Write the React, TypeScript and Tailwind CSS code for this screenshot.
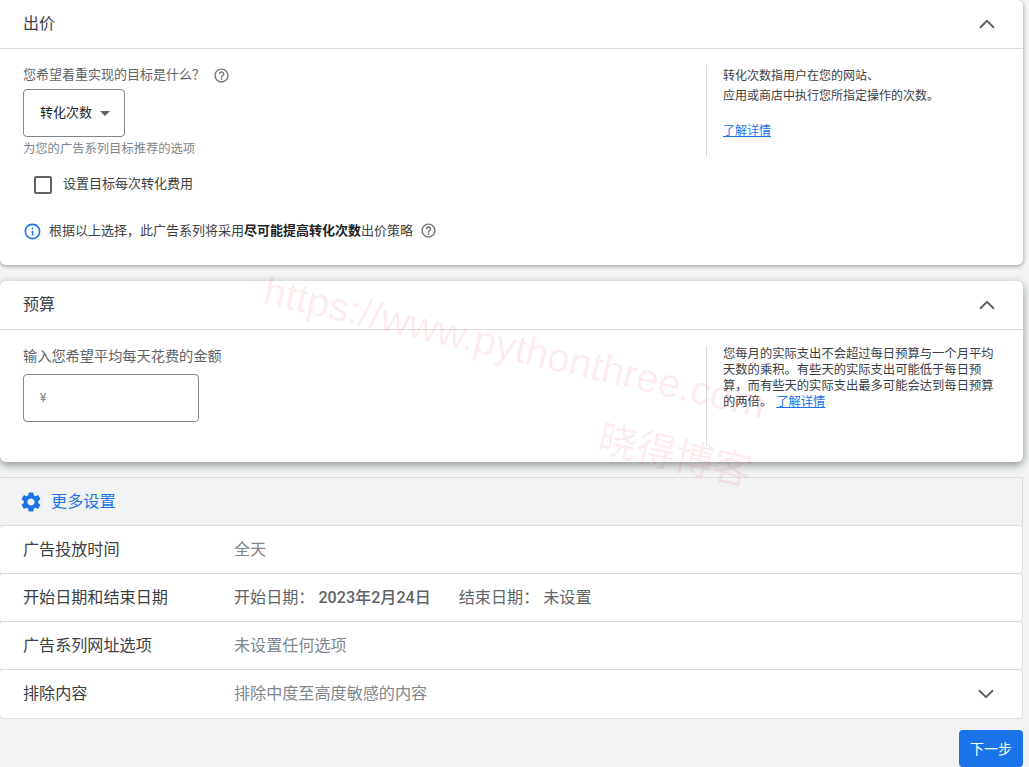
import React from "react";

const font = "font-['Roboto','Noto_Sans_CJK_SC',sans-serif]";

function HelpIcon() {
  return (
    <svg width="17" height="17" viewBox="0 0 24 24" fill="#757575">
      <path d="M11 18h2v-2h-2v2zm1-16C6.48 2 2 6.48 2 12s4.48 10 10 10 10-4.48 10-10S17.52 2 12 2zm0 18c-4.41 0-8-3.59-8-8s3.59-8 8-8 8 3.59 8 8-3.59 8-8 8zm0-14c-2.21 0-4 1.79-4 4h2c0-1.1.9-2 2-2s2 .9 2 2c0 2-3 1.75-3 5h2c0-2.25 3-2.5 3-5 0-2.21-1.79-4-4-4z" />
    </svg>
  );
}

function InfoIcon() {
  return (
    <svg width="19" height="19" viewBox="0 0 24 24" fill="#1a73e8">
      <path d="M11 7h2v2h-2V7zm0 4h2v6h-2v-6zm1-9C6.48 2 2 6.48 2 12s4.48 10 10 10 10-4.48 10-10S17.52 2 12 2zm0 18c-4.41 0-8-3.59-8-8s3.59-8 8-8 8 3.59 8 8-3.59 8-8 8z" />
    </svg>
  );
}

function GearIcon() {
  return (
    <svg width="24" height="24" viewBox="0 0 24 24" fill="#1a73e8">
      <path d="M19.14 12.94c.04-.3.06-.61.06-.94 0-.32-.02-.64-.07-.94l2.03-1.58c.18-.14.23-.41.12-.61l-1.92-3.32c-.12-.22-.37-.29-.59-.22l-2.39.96c-.5-.38-1.03-.7-1.62-.94l-.36-2.54c-.04-.24-.24-.41-.48-.41h-3.84c-.24 0-.43.17-.47.41l-.36 2.54c-.59.24-1.13.57-1.62.94l-2.39-.96c-.22-.08-.47 0-.59.22L2.74 8.87c-.12.21-.08.47.12.61l2.03 1.58c-.05.3-.09.63-.09.94s.02.64.07.94l-2.03 1.58c-.18.14-.23.41-.12.61l1.92 3.32c.12.22.37.29.59.22l2.39-.96c.5.38 1.03.7 1.62.94l.36 2.54c.05.24.24.41.48.41h3.84c.24 0 .44-.17.47-.41l.36-2.54c.59-.24 1.13-.56 1.62-.94l2.39.96c.22.08.47 0 .59-.22l1.92-3.32c.12-.22.07-.47-.12-.61l-2.01-1.58zM12 15.6c-1.98 0-3.6-1.62-3.6-3.6s1.62-3.6 3.6-3.6 3.6 1.62 3.6 3.6-1.62 3.6-3.6 3.6z" />
    </svg>
  );
}

function Chevron({ down }: { down?: boolean }) {
  return (
    <svg width="32" height="32" viewBox="0 0 32 32" fill="none" stroke="#5f6368" strokeWidth="2" className={down ? "rotate-180" : ""}>
      <path d="M9 19.8l7-7 7 7" />
    </svg>
  );
}

function CardHeader({ title }: { title: string }) {
  return (
    <div className="h-[49px] flex items-center justify-between pl-[23px] pr-5 border-b border-[#dadce0]">
      <span className="text-base text-[#3c4043]">{title}</span>
      <Chevron />
    </div>
  );
}

function SummaryRow({
  label,
  children,
  last,
}: {
  label: string;
  children: React.ReactNode;
  last?: boolean;
}) {
  return (
    <div
      className={`-ml-px flex items-center bg-white border-[#dadce0] rounded-[4px] pl-[23px] pr-5 ${
        last ? "h-[50px] border" : "h-12 border border-b-0"
      }`}
    >
      <span className="w-[211px] pt-px text-[16.1px] text-[#3c4043]">{label}</span>
      <div className="flex-1 pt-px text-[16.1px] text-[#80868b]">{children}</div>
      {last && <Chevron down />}
    </div>
  );
}

export default function App() {
  return (
    <div className={`${font} relative w-[1029px] h-[767px] overflow-hidden bg-[#f1f3f4]`}>
      <div className="w-[1023px]">
        {/* bidding */}
        <section className="h-[265px] bg-white rounded-b-[6px] rounded-tr-[6px] shadow-[0_1px_4px_rgba(60,64,67,0.55)]">
          <CardHeader title="出价" />
          <div className="flex pt-4">
            <div className="w-[706px] pl-[23px]">
              <div className="flex items-center gap-2 h-5 text-[13px] text-[#5f6368]">
                <span>您希望着重实现的目标是什么？</span>
                <HelpIcon />
              </div>
              <div className="mt-[4px] w-[102px] h-12 border border-[#80868b] rounded-[4px] flex items-center pl-4 gap-2 text-[13px] text-[#202124]">
                <span>转化次数</span>
                <span className="w-0 h-0 border-x-[5px] border-x-transparent border-t-[5px] border-t-[#5f6368]" />
              </div>
              <p className="mt-[4px] text-[12.3px] leading-4 text-[#80868b]">为您的广告系列目标推荐的选项</p>
              <label className="mt-[19px] ml-[11px] flex items-center gap-[11px] text-[13px] h-[18px] text-[#3c4043]">
                <span className="w-[18px] h-[18px] border-2 border-[#5f6368] rounded-[2px]" />
                <span className="pb-[2px]">设置目标每次转化费用</span>
              </label>
              <div className="mt-[27px] flex items-center h-5 text-[13px] text-[#3c4043]">
                <InfoIcon />
                <span className="ml-[7px]">
                  根据以上选择，此广告系列将采用
                  <b className="font-bold text-[#202124]">尽可能提高转化次数</b>
                  出价策略
                </span>
                <span className="ml-[7px] pb-[2px]">
                  <HelpIcon />
                </span>
              </div>
            </div>
            <div className="h-[92px] border-l border-[#dadce0] pl-[16px] pt-px text-xs leading-[20px] text-[#3c4043]">
              <p>转化次数指用户在您的网站、</p>
              <p>应用或商店中执行您所指定操作的次数。</p>
              <a className="block mt-[15px] text-[#1a73e8] underline">了解详情</a>
            </div>
          </div>
        </section>

        {/* budget */}
        <section className="mt-4 h-[181px] bg-white rounded-[6px] shadow-[0_3px_9px_rgba(60,64,67,0.55)]">
          <CardHeader title="预算" />
          <div className="flex pt-4">
            <div className="w-[706px] pl-[23px]">
              <p className="h-5 text-[14.2px] leading-5 text-[#5f6368]">输入您希望平均每天花费的金额</p>
              <div className="mt-[8px] w-[176px] h-12 border border-[#80868b] rounded-[4px] flex items-center pl-4 text-xs text-[#80868b]">
                ¥
              </div>
            </div>
            <div className="w-[300px] h-[100px] border-l border-[#dadce0] pl-[16px] pr-[10px] text-[12.3px] leading-[16px] text-[#3c4043]">
              您每月的实际支出不会超过每日预算与一个月平均天数的乘积。有些天的实际支出可能低于每日预算，而有些天的实际支出最多可能会达到每日预算的两倍。
              <a className="ml-1 text-[#1a73e8] underline">了解详情</a>
            </div>
          </div>
        </section>

        {/* more settings */}
        <div className="mt-[15px] h-12 flex items-center gap-2 pl-[19px] border-t border-r border-[#dadce0] text-[16.2px] text-[#1a73e8]">
          <GearIcon />
          <span className="pt-px">更多设置</span>
        </div>
        <SummaryRow label="广告投放时间">全天</SummaryRow>
        <SummaryRow label="开始日期和结束日期">
          <span className="text-[#5f6368]">
            开始日期：
            <span className="ml-1 font-medium">2023年2月24日</span>
            <span className="ml-7">结束日期：</span>
            <span className="ml-1">未设置</span>
          </span>
        </SummaryRow>
        <SummaryRow label="广告系列网址选项">未设置任何选项</SummaryRow>
        <SummaryRow label="排除内容" last>
          排除中度至高度敏感的内容
        </SummaryRow>

        <div className="mt-[11px] flex justify-end">
          <button className="w-16 h-[37px] bg-[#1a73e8] rounded-[4px] text-white text-sm">下一步</button>
        </div>
      </div>

      {/* watermark */}
      <div className="absolute left-[270px] top-[266px] origin-top-left rotate-[13deg] whitespace-nowrap text-[40px] leading-[48px] text-[#f0304a]/10 font-['Liberation_Sans',sans-serif] pointer-events-none">
        https://www.pythonthree.com
      </div>
      <div className="absolute left-[604px] top-[416px] origin-top-left rotate-[13deg] whitespace-nowrap text-[39px] leading-[46px] text-[#f0304a]/10 pointer-events-none">
        晓得博客
      </div>
    </div>
  );
}
